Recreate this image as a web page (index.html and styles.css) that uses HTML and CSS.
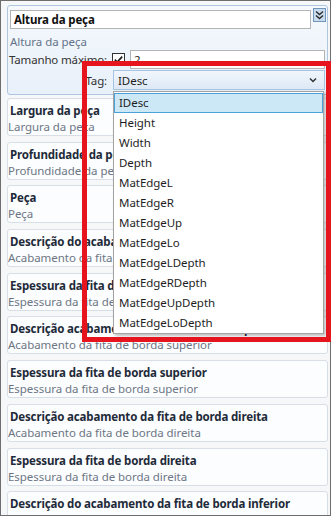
FILE: index.html
```html
<!DOCTYPE html>
<html lang="pt">
<head>
  <meta charset="UTF-8" />
  <meta name="viewport" content="width=device-width, initial-scale=1.0"/>
  <title>Propriedades da peça</title>
  <link rel="stylesheet" href="styles.css">
</head>
<body>
  <div class="panel">
    <div class="card-list">
      <div class="card card-active">
        <div class="title-row">
          <div class="text-input bold">Altura da peça</div>
          <span class="expand-btn">
            <svg width="13" height="14" viewBox="0 0 13 14">
              <rect x="0.5" y="0.5" width="12" height="13" fill="#c9dcef" stroke="#7396bb"/>
              <path d="M3 3.5 L6.5 6.5 L10 3.5 M3 7.5 L6.5 10.5 L10 7.5" fill="none" stroke="#2b2b2b" stroke-width="1.4"/>
            </svg>
          </span>
        </div>
        <div class="card-subtitle sub-active">Altura da peça</div>
        <div class="field-grid">
          <label class="field-label">Tamanho máximo:</label>
          <div class="field-inline">
            <span class="checkbox">
              <svg width="13" height="13" viewBox="0 0 13 13">
                <rect x="0.5" y="0.5" width="12" height="12" fill="#fff" stroke="#333"/>
                <path d="M2.8 6.6 L5.2 9 L10.2 3.6" fill="none" stroke="#1a1a1a" stroke-width="1.6"/>
              </svg>
            </span>
            <div class="text-input">2</div>
          </div>
          <label class="field-label">Tag:</label>
          <div class="combo-wrap">
            <div class="combo">
              <span>IDesc</span>
              <svg width="8" height="6" viewBox="0 0 8 6">
                <path d="M1 1.5 L4 4.5 L7 1.5" fill="none" stroke="#333" stroke-width="1.5"/>
              </svg>
            </div>
            <ul class="dropdown">
              <li class="selected">IDesc</li>
              <li>Height</li>
              <li>Width</li>
              <li>Depth</li>
              <li>MatEdgeL</li>
              <li>MatEdgeR</li>
              <li>MatEdgeUp</li>
              <li>MatEdgeLo</li>
              <li>MatEdgeLDepth</li>
              <li>MatEdgeRDepth</li>
              <li>MatEdgeUpDepth</li>
              <li>MatEdgeLoDepth</li>
            </ul>
          </div>
        </div>
      </div>

      <div class="card">
        <div class="card-title">Largura da peça</div>
        <div class="card-subtitle">Largura da peça</div>
      </div>
      <div class="card">
        <div class="card-title">Profundidade da peça</div>
        <div class="card-subtitle">Profundidade da peça</div>
      </div>
      <div class="card">
        <div class="card-title">Peça</div>
        <div class="card-subtitle">Peça</div>
      </div>
      <div class="card">
        <div class="card-title">Descrição do acabamento da fita de borda esquerda</div>
        <div class="card-subtitle">Acabamento da fita de borda esquerda</div>
      </div>
      <div class="card">
        <div class="card-title">Espessura da fita de borda esquerda</div>
        <div class="card-subtitle">Espessura da fita de borda esquerda</div>
      </div>
      <div class="card">
        <div class="card-title">Descrição acabamento da fita de borda superior</div>
        <div class="card-subtitle">Acabamento da fita de borda superior</div>
      </div>
      <div class="card">
        <div class="card-title">Espessura da fita de borda superior</div>
        <div class="card-subtitle">Espessura da fita de borda superior</div>
      </div>
      <div class="card">
        <div class="card-title">Descrição acabamento da fita de borda direita</div>
        <div class="card-subtitle">Acabamento da fita de borda direita</div>
      </div>
      <div class="card">
        <div class="card-title">Espessura da fita de borda direita</div>
        <div class="card-subtitle">Espessura da fita de borda direita</div>
      </div>
      <div class="card">
        <div class="card-title">Descrição do acabamento da fita de borda inferior</div>
        <div class="card-subtitle">Acabamento da fita de borda inferior</div>
      </div>
    </div>

    <!-- annotation box drawn over the dropdown -->
    <div class="highlight-box"></div>
  </div>
</body>
</html>
```

FILE: styles.css
```css
body {
  margin: 0;
  font-family: "Noto Sans", "Open Sans", sans-serif;
  font-size: 11.5px;
  letter-spacing: -0.05px;
  color: #1e1e1e;
  overflow: hidden;
}
.panel {
  position: relative;
  box-sizing: border-box;
  width: 331px;
  height: 516px;
  border: 1px solid #6e6e6e;
  background: #f5f7f9;
}
.card-list {
  height: 100%;
  box-sizing: border-box;
  padding: 4px 2px 0 6px;
  overflow: hidden;
}
.card {
  box-sizing: border-box;
  height: 38px;
  margin-bottom: 5.7px;
  padding-top: 3px;
  border: 1px solid #d8dee5;
  border-radius: 3px;
  background: #fcfdfe;
  overflow: hidden;
}
.card-title {
  padding-left: 2px;
  line-height: 17px;
  font-weight: bold;
  letter-spacing: -0.15px;
  color: #1f2b3a;
  white-space: nowrap;
}
.card-subtitle {
  line-height: 16px;
  color: #6c7684;
  white-space: nowrap;
}
.card-active {
  height: auto;
  margin-bottom: 3px;
  padding: 4px 1px 4px 2px;
  border-color: #aec6e0;
  background: linear-gradient(#f5f9fd, #e8f0f9);
  overflow: visible;
}
.sub-active {
  margin-top: 5px;
  color: #647389;
}
.title-row {
  display: flex;
  align-items: flex-start;
  gap: 2px;
}
.text-input {
  box-sizing: border-box;
  flex: 1;
  height: 19px;
  padding: 0 3px;
  line-height: 17px;
  border: 1px solid #b4b4b4;
  background: #fff;
}
.bold {
  font-weight: bold;
  letter-spacing: -0.15px;
  color: #111;
}
.expand-btn {
  display: flex;
  margin-top: -2px;
}
.field-grid {
  display: grid;
  grid-template-columns: 99px 1fr;
  column-gap: 5px;
  row-gap: 1px;
  margin: 0 1px 0 -2px;
  align-items: center;
}
.field-label {
  justify-self: end;
  white-space: nowrap;
  letter-spacing: -0.15px;
  color: #333;
}
.field-inline {
  display: flex;
  align-items: center;
  gap: 5px;
}
.checkbox {
  display: flex;
}
.combo-wrap {
  position: relative;
  margin-left: 1px;
}
.combo {
  box-sizing: border-box;
  display: flex;
  align-items: center;
  justify-content: space-between;
  height: 20px;
  padding: 0 7px 0 4px;
  border: 1px solid #a6c3e2;
  background: linear-gradient(#f1f6fc, #dde9f6);
}
.dropdown {
  position: absolute;
  top: calc(100% + 1px);
  left: 0;
  right: 1px;
  margin: 0;
  padding: 1px 0 0;
  list-style: none;
  border: 1px solid #a3a3a3;
  background: #fff;
  box-shadow: 2px 2px 3px rgba(0,0,0,0.25);
  z-index: 2;
}
.dropdown li {
  height: 20px;
  box-sizing: border-box;
  padding-left: 4px;
  line-height: 18px;
  border: 1px solid transparent;
}
.dropdown li.selected {
  background: #cce8f7;
  border-color: #4ba1d9;
}
.highlight-box {
  position: absolute;
  left: 81px;
  top: 60px;
  width: 249px;
  height: 281px;
  box-sizing: border-box;
  border: 5px solid #e5141d;
  z-index: 3;
}
```
